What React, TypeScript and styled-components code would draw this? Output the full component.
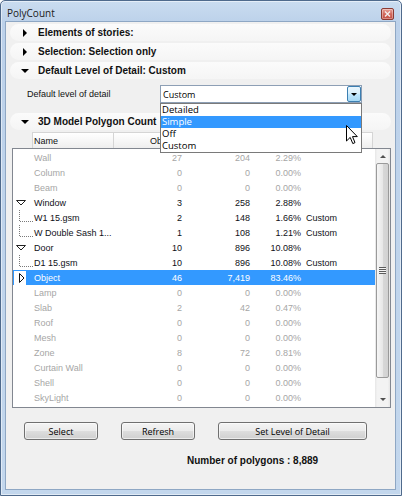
import React from "react";
import styled, { createGlobalStyle } from "styled-components";

const GlobalStyle = createGlobalStyle`
  html, body { margin: 0; padding: 0; background: #ffffff; }
  body { font-family: "Liberation Sans", Arial, sans-serif; }
  * { box-sizing: border-box; }
`;

const Window = styled.div`
  width: 402px;
  height: 496px;
  border: 1px solid #4f6a8c;
  border-radius: 5px 5px 0 0;
  background: linear-gradient(180deg, #cadcf0 0px, #bcd1ea 22px, #c3d7ed 100%);
  padding: 0 5px 5px 4px;
  display: flex;
  flex-direction: column;
  box-shadow: inset 0 0 0 1px rgba(255, 255, 255, 0.5);
`;

const TitleBar = styled.div`
  height: 20px;
  display: flex;
  align-items: flex-end;
  justify-content: space-between;
  padding: 0 2px 1px 2px;
`;

const Title = styled.span`
  font-family: "Open Sans", "Noto Sans", sans-serif;
  font-size: 10px;
  line-height: 14px;
  color: #1b1b1b;
`;

const CloseButton = styled.div`
  width: 13px;
  height: 12px;
  border: 1px solid #8c3a32;
  border-radius: 2px;
  background: linear-gradient(180deg, #e8a49b 0%, #d2685c 50%, #c24e42 100%);
  display: flex;
  align-items: center;
  justify-content: center;
  box-shadow: inset 0 0 0 1px rgba(255, 255, 255, 0.35);
`;

const Client = styled.div`
  flex: 1;
  background: #f0f0f0;
  border: 1px solid #8ea7c4;
  padding-top: 2px;
  display: flex;
  flex-direction: column;
`;

const BarStack = styled.div`
  display: flex;
  flex-direction: column;
  gap: 2px;
`;

const SectionBar = styled.div<{ $mt?: number }>`
  height: 17px;
  margin: ${(p) => p.$mt ?? 0}px 4px 0 4px;
  border-radius: 9px;
  background: linear-gradient(180deg, #fbfbfb 0%, #f5f5f5 100%);
  display: flex;
  align-items: center;
  padding-left: 11px;
  font-family: "Liberation Sans", Arial, sans-serif;
  font-weight: bold;
  font-size: 10px;
  color: #111;
`;

const Toggle = styled.span`
  width: 8px;
  height: 8px;
  margin-right: 9px;
  display: flex;
  align-items: center;
  justify-content: center;
`;

const TriRight = styled.span`
  width: 0;
  height: 0;
  border-left: 4px solid #000;
  border-top: 4px solid transparent;
  border-bottom: 4px solid transparent;
`;

const TriDown = styled.span`
  width: 0;
  height: 0;
  border-top: 4px solid #000;
  border-left: 4px solid transparent;
  border-right: 4px solid transparent;
`;

const DropRow = styled.div`
  margin-top: 6px;
  height: 18px;
  display: flex;
  align-items: center;
  padding-left: 21px;
`;

const Label = styled.span`
  width: 133px;
  font-size: 9px;
  color: #111;
`;

const SelectWrap = styled.div`
  position: relative;
  width: 202px;
  height: 18px;
`;

const SelectBox = styled.div`
  width: 100%;
  height: 100%;
  border: 1px solid #8d9fb5;
  background: #fff;
  display: flex;
  align-items: center;
  justify-content: space-between;
  font-family: "Open Sans", "Noto Sans", sans-serif;
  font-size: 9px;
  color: #000;
  padding-left: 2px;
`;

const ArrowBtn = styled.div`
  width: 14px;
  height: 16px;
  border: 1px solid #3c7fb1;
  border-radius: 2px;
  background: linear-gradient(180deg, #eaf6fd 0%, #d9f0fc 45%, #bee6fd 55%, #a7d9f5 100%);
  display: flex;
  align-items: center;
  justify-content: center;
`;

const SmallTriDown = styled.span`
  width: 0;
  height: 0;
  border-top: 3px solid #000;
  border-left: 3.5px solid transparent;
  border-right: 3.5px solid transparent;
`;

const Popup = styled.div`
  position: absolute;
  left: 0;
  top: 18px;
  width: 202px;
  height: 50px;
  border: 1px solid #7a7a7a;
  background: #fff;
  z-index: 5;
  font-family: "Open Sans", "Noto Sans", sans-serif;
  font-size: 9.5px;
`;

const PopupItem = styled.div<{ $active?: boolean }>`
  height: 12px;
  line-height: 12px;
  padding-left: 1px;
  color: ${(p) => (p.$active ? "#fff" : "#000")};
  background: ${(p) => (p.$active ? "#3399ff" : "transparent")};
`;

const Cursor = styled.svg`
  position: absolute;
  left: 186px;
  top: 40px;
  z-index: 6;
`;

const Header = styled.div`
  margin: 2px 0 0 26px;
  width: 341px;
  height: 16px;
  display: flex;
  border: 1px solid #d5d5d5;
  border-bottom: none;
  background: linear-gradient(180deg, #ffffff 0%, #f7f7f7 50%, #eeeeee 100%);
  font-size: 9px;
  color: #111;
`;

const HeadCell = styled.div<{ $w: number; $pl: number }>`
  width: ${(p) => p.$w}px;
  flex-shrink: 0;
  border-right: 1px solid #d5d5d5;
  padding-left: ${(p) => p.$pl}px;
  display: flex;
  align-items: center;
  overflow: hidden;
  white-space: nowrap;
`;

const HeadClip = styled.div`
  width: 47px;
  flex-shrink: 0;
  padding-left: 36px;
  display: flex;
  align-items: center;
  overflow: hidden;
  white-space: nowrap;
`;

const List = styled.div`
  margin: 0 4px 0 6px;
  height: 260px;
  border: 1px solid #828790;
  background: #fff;
  display: flex;
`;

const Rows = styled.div`
  flex: 1;
  padding-top: 1px;
  display: flex;
  flex-direction: column;
`;

const Row = styled.div<{ $tone: "gray" | "dark" | "sel" }>`
  height: 15px;
  flex-shrink: 0;
  display: grid;
  grid-template-columns: 129px 40px 68px 51px 1fr;
  align-items: center;
  font-size: 9px;
  color: ${(p) => (p.$tone === "gray" ? "#a6a6a6" : p.$tone === "sel" ? "#ffffff" : "#101018")};
  background: ${(p) => (p.$tone === "sel" ? "#3399ff" : "transparent")};
`;

const NameCell = styled.div`
  display: flex;
  align-items: center;
  height: 15px;
  white-space: nowrap;
  overflow: hidden;
`;

const Gutter = styled.svg`
  width: 21px;
  height: 15px;
  flex-shrink: 0;
`;

const Num = styled.div`
  text-align: right;
  white-space: nowrap;
`;

const Lod = styled.div`
  padding-left: 5px;
`;

const Scrollbar = styled.div`
  width: 15px;
  display: flex;
  flex-direction: column;
  background: linear-gradient(90deg, #e6e6e6 0%, #f3f3f3 15%, #f3f3f3 85%, #e6e6e6 100%);
`;

const ScrollBtn = styled.div<{ $h: number }>`
  height: ${(p) => p.$h}px;
  display: flex;
  align-items: center;
  justify-content: center;
`;

const ArrowUp = styled.span`
  width: 0;
  height: 0;
  border-bottom: 3px solid #505050;
  border-left: 3.5px solid transparent;
  border-right: 3.5px solid transparent;
`;

const ArrowDown = styled.span`
  width: 0;
  height: 0;
  border-top: 3px solid #505050;
  border-left: 3.5px solid transparent;
  border-right: 3.5px solid transparent;
`;

const Track = styled.div`
  flex: 1;
  display: flex;
  flex-direction: column;
`;

const Thumb = styled.div`
  height: 215px;
  margin: 0 1px;
  border: 1px solid #9a9a9a;
  border-radius: 2px;
  background: linear-gradient(90deg, #f6f6f6 0%, #e8e8e8 50%, #d8d8d8 51%, #d2d2d2 100%);
  display: flex;
  align-items: center;
  justify-content: center;
`;

const Grip = styled.div`
  width: 7px;
  height: 7px;
  background: repeating-linear-gradient(180deg, #5c5c5c 0px, #5c5c5c 1px, #f4f4f4 1px, #f4f4f4 2px);
`;

const ButtonRow = styled.div`
  margin-top: 14px;
  padding-left: 18px;
  display: flex;
  gap: 23px;
`;

const Button = styled.div<{ $w: number }>`
  width: ${(p) => p.$w}px;
  height: 18px;
  border: 1px solid #707070;
  border-radius: 3px;
  background: linear-gradient(180deg, #f4f4f4 0%, #ebebeb 48%, #dddddd 52%, #cfcfcf 100%);
  box-shadow: inset 0 0 0 1px rgba(255, 255, 255, 0.6);
  display: flex;
  align-items: center;
  justify-content: center;
  font-family: "Open Sans", "Noto Sans", sans-serif;
  font-size: 9px;
  color: #000;
`;

const Total = styled.div`
  margin-top: 15px;
  padding-left: 181px;
  font-weight: bold;
  font-size: 10px;
  line-height: 12px;
  color: #111;
`;

type Kind = "none" | "expanded" | "child" | "selected";
type RowData = {
  name: string;
  count: string;
  polys: string;
  pct: string;
  lod?: string;
  tone: "gray" | "dark" | "sel";
  kind: Kind;
};

const rows: RowData[] = [
  { name: "Wall", count: "27", polys: "204", pct: "2.29%", tone: "gray", kind: "none" },
  { name: "Column", count: "0", polys: "0", pct: "0.00%", tone: "gray", kind: "none" },
  { name: "Beam", count: "0", polys: "0", pct: "0.00%", tone: "gray", kind: "none" },
  { name: "Window", count: "3", polys: "258", pct: "2.88%", tone: "dark", kind: "expanded" },
  { name: "W1 15.gsm", count: "2", polys: "148", pct: "1.66%", lod: "Custom", tone: "dark", kind: "child" },
  { name: "W Double Sash 1...", count: "1", polys: "108", pct: "1.21%", lod: "Custom", tone: "dark", kind: "child" },
  { name: "Door", count: "10", polys: "896", pct: "10.08%", tone: "dark", kind: "expanded" },
  { name: "D1 15.gsm", count: "10", polys: "896", pct: "10.08%", lod: "Custom", tone: "dark", kind: "child" },
  { name: "Object", count: "46", polys: "7,419", pct: "83.46%", tone: "sel", kind: "selected" },
  { name: "Lamp", count: "0", polys: "0", pct: "0.00%", tone: "gray", kind: "none" },
  { name: "Slab", count: "2", polys: "42", pct: "0.47%", tone: "gray", kind: "none" },
  { name: "Roof", count: "0", polys: "0", pct: "0.00%", tone: "gray", kind: "none" },
  { name: "Mesh", count: "0", polys: "0", pct: "0.00%", tone: "gray", kind: "none" },
  { name: "Zone", count: "8", polys: "72", pct: "0.81%", tone: "gray", kind: "none" },
  { name: "Curtain Wall", count: "0", polys: "0", pct: "0.00%", tone: "gray", kind: "none" },
  { name: "Shell", count: "0", polys: "0", pct: "0.00%", tone: "gray", kind: "none" },
  { name: "SkyLight", count: "0", polys: "0", pct: "0.00%", tone: "gray", kind: "none" },
];

function GutterIcon({ kind }: { kind: Kind }) {
  return (
    <Gutter viewBox="0 0 21 15">
      {kind === "expanded" && (
        <polygon points="3.5,5.5 12.5,5.5 8,10" fill="#fff" stroke="#222" strokeWidth="1" />
      )}
      {kind === "child" && (
        <g stroke="#7a7a7a" strokeWidth="1" strokeDasharray="1 1" fill="none">
          <line x1="6.5" y1="0" x2="6.5" y2="11" />
          <line x1="7" y1="11.5" x2="21" y2="11.5" />
        </g>
      )}
      {kind === "selected" && (
        <g>
          <rect x="1" y="1" width="12" height="14" fill="#fff" />
          <polygon points="6.5,3.5 11,8 6.5,12.5" fill="#fff" stroke="#111" strokeWidth="1" />
        </g>
      )}
    </Gutter>
  );
}

export default function App() {
  return (
    <>
      <GlobalStyle />
      <Window>
        <TitleBar>
          <Title>PolyCount</Title>
          <CloseButton>
            <svg width="7" height="6" viewBox="0 0 7 6">
              <path d="M1,0.5 L6,5.5 M6,0.5 L1,5.5" stroke="#f4eeee" strokeWidth="1.4" />
            </svg>
          </CloseButton>
        </TitleBar>
        <Client>
          <BarStack>
            <SectionBar>
              <Toggle>
                <TriRight />
              </Toggle>
              Elements of stories:
            </SectionBar>
            <SectionBar>
              <Toggle>
                <TriRight />
              </Toggle>
              Selection: Selection only
            </SectionBar>
            <SectionBar>
              <Toggle>
                <TriDown />
              </Toggle>
              Default Level of Detail: Custom
            </SectionBar>
          </BarStack>
          <DropRow>
            <Label>Default level of detail</Label>
            <SelectWrap>
              <SelectBox>
                Custom
                <ArrowBtn>
                  <SmallTriDown />
                </ArrowBtn>
              </SelectBox>
              <Popup>
                <PopupItem>Detailed</PopupItem>
                <PopupItem $active>Simple</PopupItem>
                <PopupItem>Off</PopupItem>
                <PopupItem>Custom</PopupItem>
              </Popup>
              <Cursor width="12" height="20" viewBox="0 0 12 20">
                <path
                  d="M0.5,0.5 L0.5,16 L4.2,12.4 L6.8,18.6 L9,17.6 L6.5,11.6 L11.3,11.6 Z"
                  fill="#fff"
                  stroke="#000"
                  strokeWidth="1"
                  strokeLinejoin="round"
                />
              </Cursor>
            </SelectWrap>
          </DropRow>
          <SectionBar $mt={10}>
            <Toggle>
              <TriDown />
            </Toggle>
            3D Model Polygon Count
          </SectionBar>
          <Header>
            <HeadCell $w={81} $pl={1}>Name</HeadCell>
            <HeadClip>Ob</HeadClip>
          </Header>
          <List>
            <Rows>
              {rows.map((r) => (
                <Row key={r.name} $tone={r.tone}>
                  <NameCell>
                    <GutterIcon kind={r.kind} />
                    {r.name}
                  </NameCell>
                  <Num>{r.count}</Num>
                  <Num>{r.polys}</Num>
                  <Num>{r.pct}</Num>
                  <Lod>{r.lod ?? ""}</Lod>
                </Row>
              ))}
            </Rows>
            <Scrollbar>
              <ScrollBtn $h={14}>
                <ArrowUp />
              </ScrollBtn>
              <Track>
                <Thumb>
                  <Grip />
                </Thumb>
              </Track>
              <ScrollBtn $h={16}>
                <ArrowDown />
              </ScrollBtn>
            </Scrollbar>
          </List>
          <ButtonRow>
            <Button $w={74}>Select</Button>
            <Button $w={74}>Refresh</Button>
            <Button $w={149}>Set Level of Detail</Button>
          </ButtonRow>
          <Total>Number of polygons : 8,889</Total>
        </Client>
      </Window>
    </>
  );
}
